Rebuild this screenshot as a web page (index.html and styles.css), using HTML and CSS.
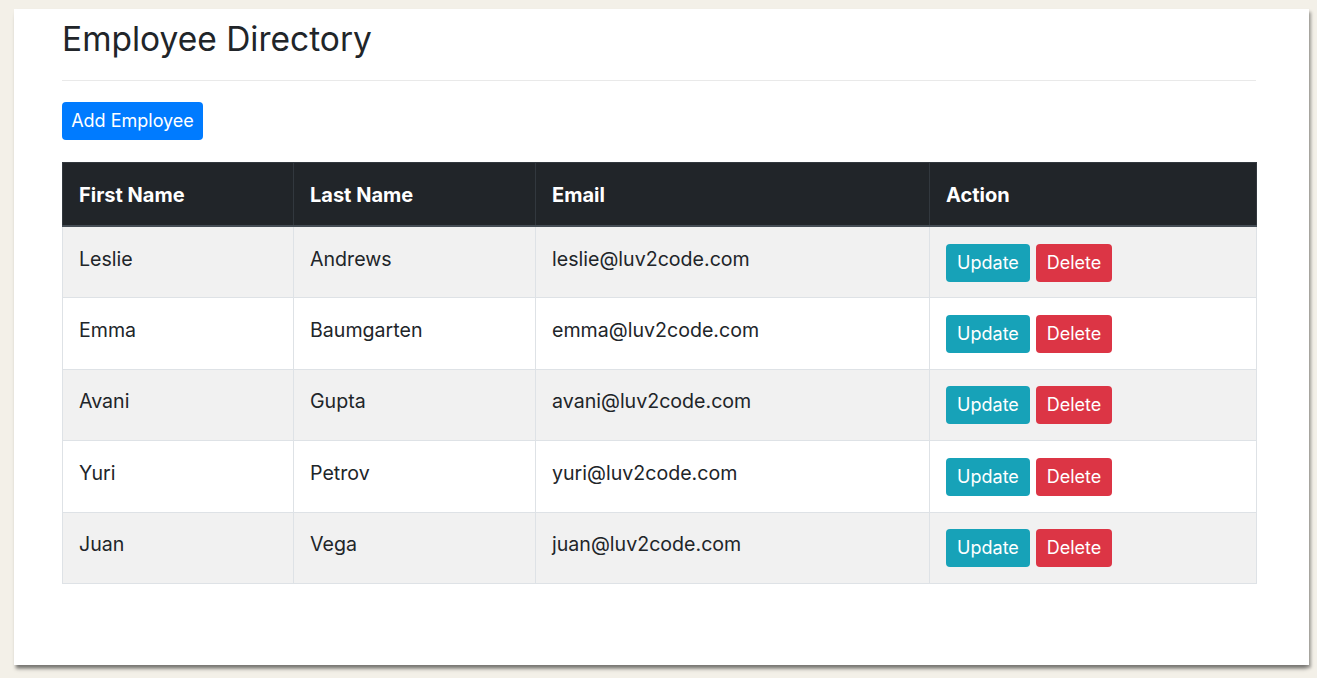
FILE: index.html
```html
<!DOCTYPE html>
<html lang="en">
<head>
<meta charset="utf-8">
<title>Employee Directory</title>
<link rel="stylesheet" href="styles.css">
</head>
<body>
<div class="sheet">
  <div class="container">
    <h1 class="title">Employee Directory</h1>
    <hr class="rule">
    <div class="toolbar"><button class="btn btn-primary">Add Employee</button></div>
    <table class="table">
      <colgroup>
        <col class="c1"><col class="c2"><col class="c3"><col class="c4">
      </colgroup>
      <thead>
        <tr><th>First Name</th><th>Last Name</th><th>Email</th><th>Action</th></tr>
      </thead>
      <tbody>
        <tr><td>Leslie</td><td>Andrews</td><td>leslie@luv2code.com</td><td><button class="btn btn-info">Update</button><button class="btn btn-danger">Delete</button></td></tr>
        <tr><td>Emma</td><td>Baumgarten</td><td>emma@luv2code.com</td><td><button class="btn btn-info">Update</button><button class="btn btn-danger">Delete</button></td></tr>
        <tr><td>Avani</td><td>Gupta</td><td>avani@luv2code.com</td><td><button class="btn btn-info">Update</button><button class="btn btn-danger">Delete</button></td></tr>
        <tr><td>Yuri</td><td>Petrov</td><td>yuri@luv2code.com</td><td><button class="btn btn-info">Update</button><button class="btn btn-danger">Delete</button></td></tr>
        <tr><td>Juan</td><td>Vega</td><td>juan@luv2code.com</td><td><button class="btn btn-info">Update</button><button class="btn btn-danger">Delete</button></td></tr>
      </tbody>
    </table>
  </div>
</div>
</body>
</html>
```

FILE: styles.css
```css
html, body {
  margin: 0;
  padding: 0;
  height: 100%;
}
body {
  background: #f3f0e8;
  font-family: Inter, "Noto Sans", sans-serif;
  color: #212529;
  overflow: hidden;
}
.sheet {
  margin: 9px 0 0 14px;
  width: 1295px;
  height: 656px;
  background: #ffffff;
  box-shadow: 2px 3px 3px rgba(0,0,0,0.35), 0 6px 4px -2px rgba(0,0,0,0.25);
}
.container {
  padding: 0 53px 0 48px;
}
.title {
  margin: 0;
  padding-top: 10px;
  font-size: 33.5px;
  font-weight: 400;
  line-height: 40px;
  letter-spacing: 0;
}
.rule {
  margin: 21px 0 0 0;
  border: 0;
  border-top: 1px solid #e9e9e9;
  height: 0;
}
.toolbar {
  margin-top: 21px;
}
.btn {
  font-family: Inter, "Noto Sans", sans-serif;
  color: #fff;
  border: 0;
  border-radius: 4px;
  font-size: 18px;
  line-height: 38px;
  height: 38px;
  padding: 0;
  vertical-align: top;
}
.btn-primary {
  background: #007bff;
  width: 141px;
}
.btn-info {
  background: #17a2b8;
  width: 84px;
}
.btn-danger {
  background: #dc3545;
  width: 76px;
  margin-left: 6px;
}
.table {
  margin-top: 22px;
  width: 1194px;
  border-collapse: collapse;
  table-layout: fixed;
  font-size: 19.6px;
}
.c1 { width: 231px; }
.c2 { width: 242px; }
.c3 { width: 394px; }
.c4 { width: 327px; }
.table th {
  background: #212529;
  color: #fff;
  font-weight: 700;
  font-size: 20px;
  text-align: left;
  padding: 17px 16px 15px 16px;
  line-height: 30px;
  border: 1px solid #32383e;
  border-bottom: 2px solid #454d55;
}
.table td {
  padding: 16.7px 16px 15.7px 16px;
  line-height: 30px;
  border: 1px solid #dee2e6;
  vertical-align: top;
}
.table tbody tr:nth-child(odd) {
  background: #f1f1f1;
}
```
